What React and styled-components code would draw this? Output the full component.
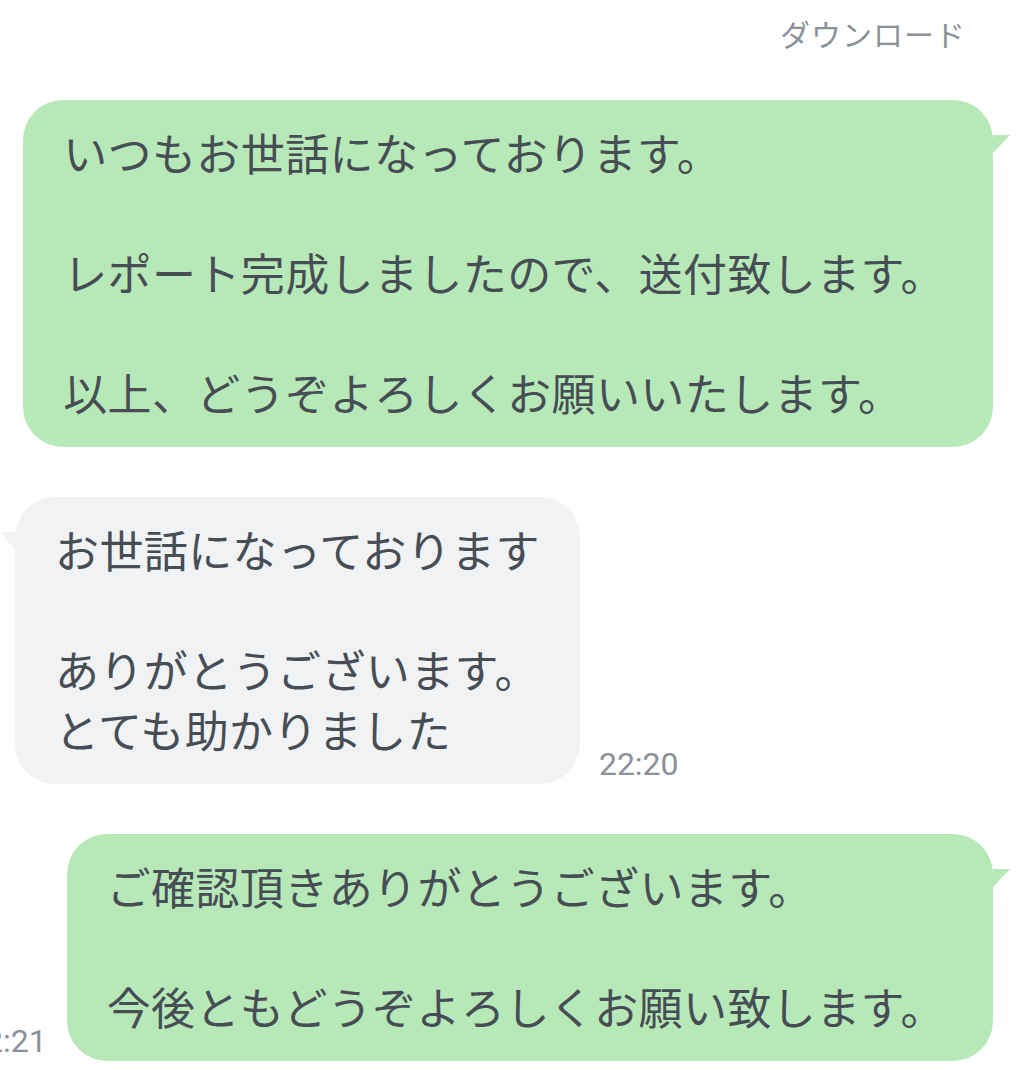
import React from 'react'
import styled, { createGlobalStyle } from 'styled-components';

const GlobalStyle = createGlobalStyle`
  html, body {
    margin: 0;
    padding: 0;
    background: #ffffff;
  }
  body {
    font-family: "Noto Sans CJK JP", "Noto Sans", sans-serif;
    overflow: hidden;
  }
`;

const messages = [
  {
    id: 1,
    mine: true,
    text: 'いつもお世話になっております。\n\nレポート完成しましたので、送付致します。\n\n以上、どうぞよろしくお願いいたします。',
  },
  {
    id: 2,
    mine: false,
    text: 'お世話になっております\n\nありがとうございます。\nとても助かりました',
    time: '22:20',
  },
  {
    id: 3,
    mine: true,
    text: 'ご確認頂きありがとうございます。\n\n今後ともどうぞよろしくお願い致します。',
    time: '22:21',
  },
];

const App = () => {
  return (
    <ChatScreen>
      <GlobalStyle />
      <DownloadLabel>ダウンロード</DownloadLabel>
      <MessageList>
        {messages.map((msg) => (
          <MessageRow key={msg.id} mine={msg.mine}>
            {msg.mine && msg.time && <TimeStamp>{msg.time}</TimeStamp>}
            <Bubble mine={msg.mine}>{msg.text}</Bubble>
            {!msg.mine && msg.time && <TimeStamp>{msg.time}</TimeStamp>}
          </MessageRow>
        ))}
      </MessageList>
    </ChatScreen>
  );
};

export default App


const ChatScreen = styled.div`
  width: 1017px;
  height: 1081px;
  overflow: hidden;
  display: flex;
  flex-direction: column;
`;

const DownloadLabel = styled.div`
  align-self: flex-end;
  margin: 13px 51px 0 0;
  font-size: 30px;
  line-height: 40px;
  color: #8b9199;
  letter-spacing: 1px;
`;

const MessageList = styled.div`
  display: flex;
  flex-direction: column;
  gap: 50px;
  margin-top: 47px;
`;

const MessageRow = styled.div`
  display: flex;
  align-items: flex-end;
  justify-content: ${(p) => (p.mine ? 'flex-end' : 'flex-start')};
  gap: ${(p) => (p.mine ? '20px' : '19px')};
  padding: ${(p) => (p.mine ? '0 24px 0 0' : '0 0 0 15px')};
`;

const Bubble = styled.div`
  position: relative;
  flex-shrink: 0;
  white-space: pre;
  font-size: 44px;
  line-height: 60px;
  letter-spacing: 0.4px;
  color: #474d55;
  background: ${(p) => (p.mine ? '#b7e9b8' : '#f0f2f4')};
  border-radius: 40px;
  padding: ${(p) => (p.mine ? '22px 48px 25px 40px' : '22px 40px 25px 40px')};

  &::after {
    content: '';
    position: absolute;
    top: 35px;
    width: ${(p) => (p.mine ? '17px' : '15px')};
    height: 18px;
    background: inherit;
    ${(p) =>
      p.mine
        ? 'right: -17px; clip-path: polygon(0 0, 100% 0, 0 100%);'
        : 'left: -15px; clip-path: polygon(0 0, 100% 0, 100% 100%);'}
  }
`;

const TimeStamp = styled.span`
  flex-shrink: 0;
  font-family: Roboto, "Noto Sans", sans-serif;
  font-size: 32px;
  line-height: 38px;
  color: #8b9199;
  margin-bottom: 1px;
`;
